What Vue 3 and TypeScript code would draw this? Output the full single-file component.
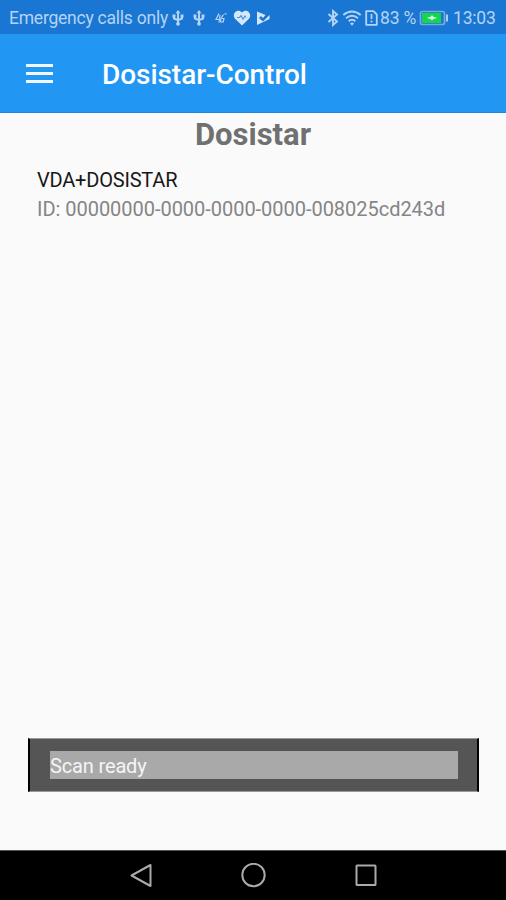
<script setup lang="ts">
interface Device {
  name: string
  id: string
}

const title = 'Dosistar-Control'
const heading = 'Dosistar'
const devices: Device[] = [
  { name: 'VDA+DOSISTAR', id: '00000000-0000-0000-0000-008025cd243d' },
]
const toast = 'Scan ready'
</script>

<template>
  <div class="screen">
    <header class="status">
      <span class="carrier">Emergency calls only</span>
      <svg v-for="n in 2" :key="n" class="usb" :class="{ second: n === 2 }" width="14" height="18" viewBox="0 0 14 18">
        <path d="M7 2v14M3 6v3.500L7 11.200l4-1.700V6" fill="none" stroke="currentColor" stroke-width="2" />
        <path d="M4.500 4.300 7 1l2.500 3.300zM1.500 5.500h3v3h-3zM9.500 5.500h3v3h-3z" fill="currentColor" />
        <circle cx="7" cy="14.800" r="1.900" fill="currentColor" />
      </svg>
      <svg class="signal" width="12" height="12" viewBox="0 0 12 12">
        <path d="M4 1.500 1 7.500h3.500M5 3 4 10.500M8.500 2.500 6 6.500 5.500 10h2.700L9 6.500H7M9.500 1.800h2" fill="none" stroke="currentColor" stroke-width="1.200" />
      </svg>
      <svg class="heart" width="18" height="16" viewBox="0 0 18 16">
        <path d="M9 15.500 2.300 9C-2 4.500 4-2.500 9 2.500c5-5 11 2 6.700 6.500z" fill="currentColor" />
        <path d="M4 7.500h2.500l1.500-2 2 3.500 2-3 1 1.500" fill="none" stroke="#4b91df" stroke-width="1.200" />
      </svg>
      <svg class="play" width="14" height="16" viewBox="0 0 14 16">
        <path d="M1 1.500 9.500 5 7 8 5 6 3 8l4 3.500L13.500 5v4L1 15z" fill="currentColor" />
      </svg>
      <span class="spacer" />
      <svg class="bluetooth" width="12" height="18" viewBox="0 0 12 18">
        <path d="m1.500 5 8.500 7.500L6 16V2l4 3.500L1.500 13" fill="none" stroke="currentColor" stroke-width="1.900" />
      </svg>
      <svg class="wifi" width="20" height="16" viewBox="0 0 20 16">
        <path d="M1.300 5Q10-2 18.700 5M4 8.300Q10 3.300 16 8.300M6.700 11.300Q10 8.300 13.300 11.300" fill="none" stroke="currentColor" stroke-width="2" />
        <path d="m8 13.200 2 2.500 2-2.500Q10 11.600 8 13.200z" fill="currentColor" />
      </svg>
      <svg class="sim" width="13" height="16" viewBox="0 0 13 16">
        <path d="M1.200 1.200h7.300l3.300 3.300v10.300H1.200z" fill="none" stroke="currentColor" stroke-width="1.800" stroke-linejoin="round" />
        <path d="M6.500 4v5M6.500 10.500v2" stroke="currentColor" stroke-width="1.700" />
      </svg>
      <span class="percent">83 %</span>
      <svg class="battery" width="30" height="16" viewBox="0 0 30 16">
        <rect x="1.500" y="1.500" width="24" height="13" rx="2" fill="#1976d2" stroke="#78a9e4" stroke-width="1.700" />
        <rect x="3" y="3" width="19" height="10" fill="#12d74c" />
        <path d="m8 8 4-1.500L13 5l1 1.500L18 8l-4 1.200-1 1.500-1-1.500z" fill="#d8ffe3" />
        <path d="M28 4.500v7" stroke="#a9ccf2" stroke-width="2" />
      </svg>
      <time class="clock">13:03</time>
    </header>

    <div class="toolbar">
      <button class="menu" aria-label="Menu"><i /><i /><i /></button>
      <h1>{{ title }}</h1>
    </div>

    <main>
      <h2>{{ heading }}</h2>
      <ul>
        <li v-for="device in devices" :key="device.id">
          <div class="name">{{ device.name }}</div>
          <div class="id">ID: {{ device.id }}</div>
        </li>
      </ul>
      <div class="toast"><div class="message">{{ toast }}</div></div>
    </main>

    <nav>
      <svg width="24" height="26" viewBox="0 0 24 26"><path d="M21.500 2v21L2.500 12.500z" /></svg>
      <svg width="26" height="26" viewBox="0 0 26 26"><circle cx="12.500" cy="12" r="11.200" /></svg>
      <svg width="24" height="26" viewBox="0 0 24 26"><rect x="2.500" y="2.500" width="19" height="19.500" rx=".5" /></svg>
    </nav>
  </div>
</template>

<style>
body { margin: 0; }
</style>

<style scoped>
.screen {
  width: 506px;
  height: 900px;
  display: flex;
  flex-direction: column;
  overflow: hidden;
  background: #fafafa;
  font-family: Roboto, "Liberation Sans", sans-serif;
}
.status {
  box-sizing: border-box;
  height: 34px;
  padding: 1px 10px 0 9px;
  display: flex;
  align-items: center;
  flex: none;
  background: #1976d2;
  color: #b5d3f4;
  font-size: 17.500px;
  line-height: 34px;
  white-space: nowrap;
}
.status svg { flex: none; }
.carrier { width: 162px; letter-spacing: -0.230px; }
.second { margin-left: 7px; }
.signal { margin-left: 9px; }
.heart { margin-left: 6px; color: #d5e7fc; }
.play { margin-left: 5px; color: #d5e7fc; }
.spacer { flex: 1; }
.wifi { margin-left: 3px; }
.sim { margin-left: 3px; }
.percent { width: 37px; margin-left: 2px; letter-spacing: -0.200px; }
.battery { margin-left: 2px; }
.clock { width: 43px; margin-left: 4px; letter-spacing: -0.200px; }
.toolbar {
  box-sizing: border-box;
  height: 79px;
  padding-left: 26px;
  display: flex;
  align-items: center;
  flex: none;
  background: #2196f3;
  border-bottom: 1px solid #1b86df;
  color: #fff;
}
.menu {
  width: 27px;
  height: 19px;
  padding: 0;
  border: 0;
  background: none;
  display: flex;
  flex-direction: column;
  justify-content: space-between;
}
.menu i { height: 3px; background: #f0f7fe; }
h1 {
  margin: 3px 0 0 49px;
  font-size: 28px;
  line-height: 34px;
  font-weight: 500;
  letter-spacing: -0.050px;
}
main {
  flex: 1;
  display: flex;
  flex-direction: column;
}
h2 {
  margin: 4px 0 0;
  text-align: center;
  font-size: 31px;
  line-height: 36px;
  font-weight: 700;
  color: #707070;
}
ul {
  margin: 13px 0 0;
  padding: 0 37px;
  list-style: none;
}
li { font-size: 20px; line-height: 28px; white-space: nowrap; }
.name { color: #171717; letter-spacing: -0.200px; }
.id { margin-top: 1px; color: #858585; letter-spacing: -0.030px; }
.toast {
  box-sizing: border-box;
  height: 54px;
  margin: auto 27px 58px 28px;
  padding: 12px 19px 12px 20px;
  background: #555;
  border: solid #000;
  border-width: 1px 2px;
  border-top-color: #999;
  border-bottom-color: #999;
}
.message {
  height: 28px;
  background: #a9a9a9;
  color: #f5f5f5;
  font-size: 20px;
  line-height: 30px;
  letter-spacing: -0.150px;
}
nav {
  box-sizing: border-box;
  height: 50px;
  padding: 0 128px 0 129px;
  display: flex;
  align-items: center;
  justify-content: space-between;
  flex: none;
  background: #000;
  border-top: 1px solid #555;
}
nav svg { fill: none; stroke: #aaa; stroke-width: 2; stroke-linejoin: round; }
</style>
